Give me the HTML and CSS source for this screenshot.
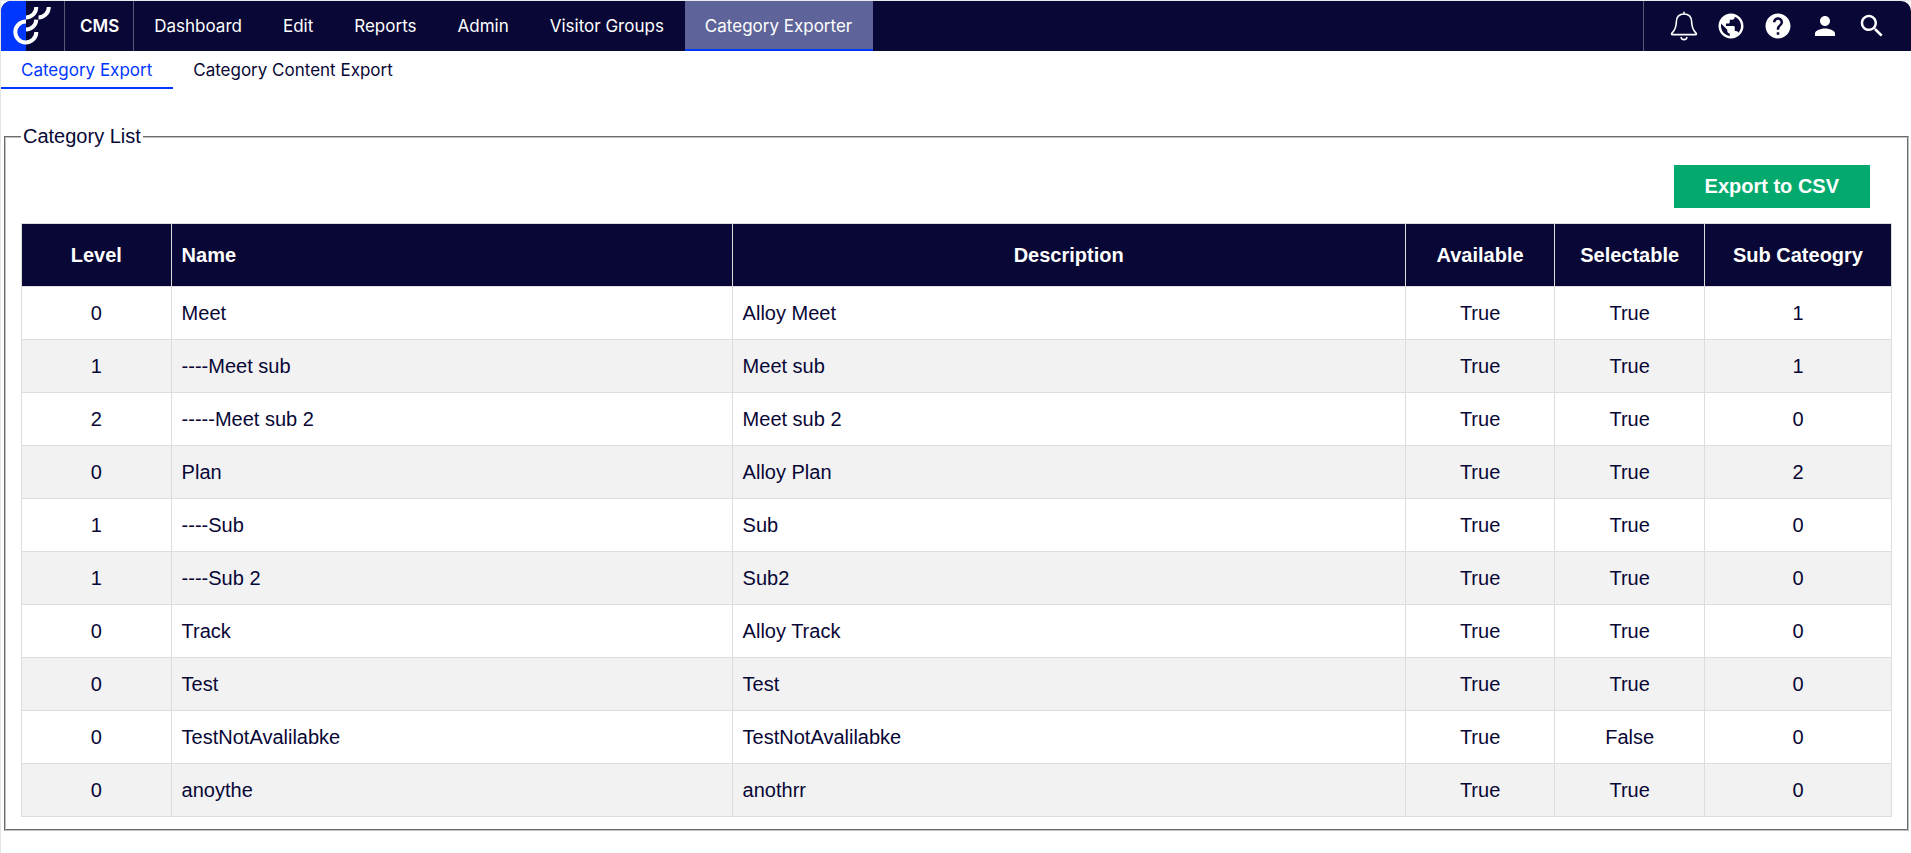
FILE: index.html
```html
<!DOCTYPE html>
<html lang="en">
<head>
<meta charset="utf-8">
<meta name="viewport" content="width=device-width, initial-scale=1">
<title>Category Exporter</title>
<link rel="stylesheet" href="styles.css">
</head>
<body>
<header class="topbar">
  <a class="logo" href="#" aria-label="Home">
    <svg width="63" height="50" viewBox="1 1 63 50" aria-hidden="true">
      <rect x="1" y="1" width="25" height="50" fill="#0037ff"/>
      <g fill="none" stroke="#fff" stroke-width="4">
        <path d="M26 21.5A10.5 10.5 0 1 0 36.3 32"/>
        <path d="M26 29.5A10.3 10.3 0 0 0 36.3 19.6"/>
        <path d="M26 17.5A10.3 10.5 0 0 0 36.3 7"/>
        <path d="M38.5 17.5A10.3 10.5 0 0 0 48.8 7"/>
      </g>
    </svg>
  </a>
  <a class="product" href="#">CMS</a>
  <nav class="menu" aria-label="Main">
    <a class="menu-item" href="#">Dashboard</a>
    <a class="menu-item" href="#">Edit</a>
    <a class="menu-item" href="#">Reports</a>
    <a class="menu-item" href="#">Admin</a>
    <a class="menu-item" href="#">Visitor Groups</a>
    <a class="menu-item menu-item-active" href="#" aria-current="page">Category Exporter</a>
  </nav>
  <div class="tools">
    <button class="tool" type="button" aria-label="Notifications">
      <svg viewBox="0 0 30 30" fill="none" stroke="#fff" stroke-width="1.6" stroke-linejoin="round" stroke-linecap="round"><path d="M15 1.2V3M15 3C10 3 7.6 6.4 7.4 10.5C7.2 15.5 6.8 18.3 3.4 21.6C2.2 22.8 2.4 23.6 3.6 23.6H26.4C27.6 23.6 27.8 22.8 26.6 21.6C23.2 18.3 22.8 15.5 22.6 10.5C22.4 6.4 20 3 15 3ZM12.2 26.6C12.6 29.3 17.4 29.3 17.8 26.6"/></svg>
    </button>
    <button class="tool" type="button" aria-label="Language">
      <svg viewBox="0 0 24 24" fill="#fff"><path d="M12 2C6.480 2 2 6.480 2 12s4.480 10 10 10 10-4.480 10-10S17.520 2 12 2zm-1 17.930c-3.950-.49-7-3.850-7-7.930 0-.62.080-1.210.21-1.790L9 15v1c0 1.100.9 2 2 2v1.930zm6.900-2.540c-.26-.81-1-1.390-1.900-1.390h-1v-3c0-.55-.45-1-1-1H8v-2h2c.55 0 1-.45 1-1V7h2c1.100 0 2-.9 2-2v-.41c2.930 1.190 5 4.060 5 7.410 0 2.080-.8 3.970-2.100 5.390z"/></svg>
    </button>
    <button class="tool" type="button" aria-label="Help">
      <svg viewBox="0 0 24 24" fill="#fff"><path d="M12 2C6.480 2 2 6.480 2 12s4.480 10 10 10 10-4.480 10-10S17.520 2 12 2zm1 17h-2v-2h2v2zm2.070-7.750l-.9.920C13.450 12.900 13 13.500 13 15h-2v-.5c0-1.100.45-2.100 1.170-2.830l1.240-1.260c.37-.36.59-.86.59-1.410 0-1.100-.9-2-2-2s-2 .9-2 2H8c0-2.210 1.790-4 4-4s4 1.790 4 4c0 .88-.36 1.680-.93 2.250z"/></svg>
    </button>
    <button class="tool" type="button" aria-label="User">
      <svg viewBox="0 0 24 24" fill="#fff"><path d="M12 12c2.210 0 4-1.790 4-4s-1.790-4-4-4-4 1.790-4 4 1.790 4 4 4zm0 2c-2.670 0-8 1.340-8 4v2h16v-2c0-2.660-5.330-4-8-4z"/></svg>
    </button>
    <button class="tool" type="button" aria-label="Search">
      <svg viewBox="0 0 24 24" fill="#fff"><path d="M15.500 14h-.79l-.28-.27C15.410 12.590 16 11.110 16 9.500 16 5.910 13.090 3 9.500 3S3 5.910 3 9.500 5.910 16 9.500 16c1.610 0 3.090-.59 4.230-1.570l.27.28v.79l5 4.990L20.490 19l-4.990-5zm-6 0C7.010 14 5 11.990 5 9.500S7.010 5 9.500 5 14 7.010 14 9.500 11.990 14 9.500 14z"/></svg>
    </button>
  </div>
</header>
<nav class="subnav" aria-label="Category Exporter">
  <a class="subnav-item subnav-item-active" href="#" aria-current="page">Category Export</a>
  <a class="subnav-item" href="#">Category Content Export</a>
</nav>
<main class="content">
  <fieldset class="panel">
    <legend class="panel-title">Category List</legend>
    <div class="actions">
      <button class="export" type="button">Export to CSV</button>
    </div>
    <table class="categories">
      <colgroup>
        <col class="col-flag"><col class="col-name"><col class="col-description"><col class="col-flag"><col class="col-flag"><col class="col-sub">
      </colgroup>
      <thead>
        <tr><th>Level</th><th class="text">Name</th><th>Description</th><th>Available</th><th>Selectable</th><th>Sub Cateogry</th></tr>
      </thead>
      <tbody>
        <tr><td>0</td><td class="text">Meet</td><td class="text">Alloy Meet</td><td>True</td><td>True</td><td>1</td></tr>
        <tr><td>1</td><td class="text">----Meet sub</td><td class="text">Meet sub</td><td>True</td><td>True</td><td>1</td></tr>
        <tr><td>2</td><td class="text">-----Meet sub 2</td><td class="text">Meet sub 2</td><td>True</td><td>True</td><td>0</td></tr>
        <tr><td>0</td><td class="text">Plan</td><td class="text">Alloy Plan</td><td>True</td><td>True</td><td>2</td></tr>
        <tr><td>1</td><td class="text">----Sub</td><td class="text">Sub</td><td>True</td><td>True</td><td>0</td></tr>
        <tr><td>1</td><td class="text">----Sub 2</td><td class="text">Sub2</td><td>True</td><td>True</td><td>0</td></tr>
        <tr><td>0</td><td class="text">Track</td><td class="text">Alloy Track</td><td>True</td><td>True</td><td>0</td></tr>
        <tr><td>0</td><td class="text">Test</td><td class="text">Test</td><td>True</td><td>True</td><td>0</td></tr>
        <tr><td>0</td><td class="text">TestNotAvalilabke</td><td class="text">TestNotAvalilabke</td><td>True</td><td>False</td><td>0</td></tr>
        <tr><td>0</td><td class="text">anoythe</td><td class="text">anothrr</td><td>True</td><td>True</td><td>0</td></tr>
      </tbody>
    </table>
  </fieldset>
</main>
</body>
</html>
```

FILE: styles.css
```css
* {
  box-sizing: border-box;
}

html {
  min-height: 100%;
  background: #fff;
  border-top: 1px solid #e8eaed;
  border-left: 1px solid #e4e4e4;
}

body {
  margin: 0;
  color: #080736;
  font-family: "Liberation Sans", Arial, sans-serif;
  font-size: 20px;
  line-height: 23px;
}

a {
  color: inherit;
  text-decoration: none;
}

.topbar {
  display: flex;
  height: 50px;
  overflow: hidden;
  border-radius: 10px 10px 0 0;
  background: #080736;
  color: #fff;
}

.topbar,
.subnav {
  font-family: Inter, sans-serif;
  font-size: 17px;
}

.logo,
.product {
  display: flex;
  align-items: center;
  border-right: 1px solid #5a5978;
}

.logo svg {
  display: block;
}

.product {
  padding: 0 14px 0 15px;
  font-weight: 600;
}

.menu {
  display: flex;
}

.menu-item,
.subnav-item {
  display: flex;
  align-items: center;
  padding: 0 21px 0 20px;
}

.menu-item-active {
  background: #5e6499;
  box-shadow: inset 0 -2px #0037ff;
}

.tools {
  display: flex;
  align-items: center;
  gap: 17px;
  margin-left: auto;
  padding: 0 24px 0 25px;
  border-left: 1px solid #5a5978;
}

.tool {
  width: 30px;
  height: 30px;
  padding: 0;
  border: 0;
  background: none;
  cursor: pointer;
}

.tool svg {
  display: block;
  width: 30px;
  height: 30px;
}

.subnav {
  display: flex;
  height: 38px;
}

.subnav-item-active {
  color: #0037ff;
  box-shadow: inset 0 -2px #0037ff;
}

.content {
  padding: 36px 2px 20px 3px;
}

.panel {
  min-width: 0;
  margin: 0;
  padding: 17px 15px 12px;
  border: 2px groove #c0c0c0;
}

.panel-title {
  padding: 0 2px;
}

.actions {
  display: flex;
  justify-content: flex-end;
  padding: 0 22px 15px 0;
}

.export {
  padding: 10px 31px;
  border: 0;
  background: #04aa6d;
  color: #fff;
  font: inherit;
  font-weight: 700;
  cursor: pointer;
}

.categories {
  width: 100%;
  border-collapse: collapse;
  table-layout: fixed;
}

.col-flag {
  width: 8%;
}

.col-name {
  width: 30%;
}

.col-description {
  width: 36%;
}

.col-sub {
  width: 10%;
}

.categories th,
.categories td {
  border: 1px solid #ddd;
  text-align: center;
}

.categories th {
  padding: 20px 10px 19px;
  background: #080736;
  color: #fff;
}

.categories td {
  padding: 15px 10px 14px;
}

.categories .text {
  text-align: left;
}

.categories tbody tr:nth-child(even) {
  background: #f2f2f2;
}
```
